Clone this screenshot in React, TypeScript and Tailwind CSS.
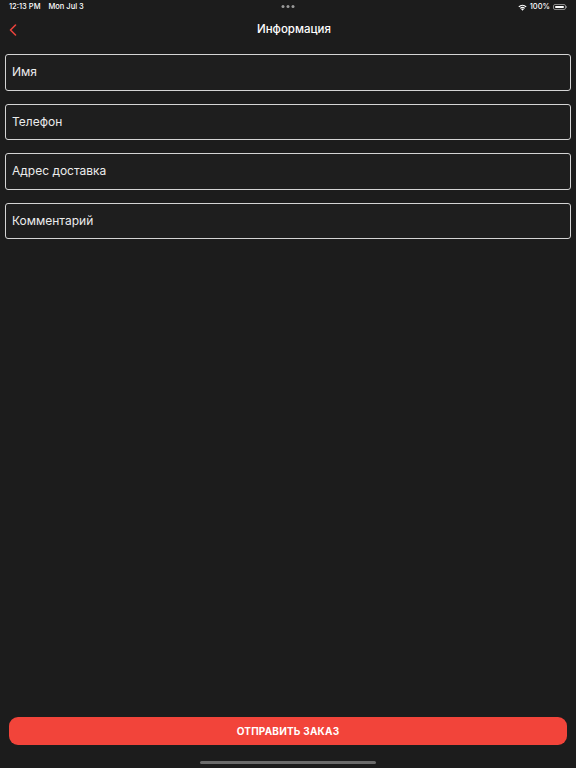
import React from "react";

const fields = ["Имя", "Телефон", "Адрес доставка", "Комментарий"];

const StatusBar = () => (
  <div className="h-[14px] flex items-center justify-between px-[9px] text-[7.5px] font-medium text-white">
    <div className="flex items-center gap-[8px]">
      <span>12:13 PM</span>
      <span>Mon Jul 3</span>
    </div>
    <div className="flex items-center gap-[2px] absolute left-1/2 -translate-x-1/2 top-[5px]">
      <span className="w-[3px] h-[3px] rounded-full bg-[#9a9a9a]" />
      <span className="w-[3px] h-[3px] rounded-full bg-[#9a9a9a]" />
      <span className="w-[3px] h-[3px] rounded-full bg-[#9a9a9a]" />
    </div>
    <div className="flex items-center gap-[3px]">
      <svg width="9" height="7" viewBox="0 0 18 14">
        <path d="M9 13.5 L6 10.2 A4.5 4.5 0 0 1 12 10.2 Z" fill="white" />
        <path d="M3.8 8 A7.5 7.5 0 0 1 14.2 8 L12.6 9.7 A5.2 5.2 0 0 0 5.4 9.7 Z" fill="white" />
        <path d="M0.8 4.9 A12 12 0 0 1 17.2 4.9 L15.6 6.6 A9.7 9.7 0 0 0 2.4 6.6 Z" fill="white" />
      </svg>
      <span>100%</span>
      <div className="flex items-center">
        <div className="w-[13px] h-[6.5px] rounded-[2px] border border-[#8a8a8a] p-[1px]">
          <div className="w-full h-full rounded-[1px] bg-white" />
        </div>
        <div className="w-[1px] h-[2.5px] bg-[#8a8a8a] rounded-r-sm" />
      </div>
    </div>
  </div>
);

export default function App() {
  return (
    <div
      className="relative w-[576px] h-[768px] bg-[#1c1c1c] flex flex-col overflow-hidden"
      style={{ fontFamily: "Inter, 'Noto Sans', sans-serif" }}
    >
      {/* STATUS */}
      <StatusBar />
      {/* NAV */}
      <div className="relative h-[30px] flex items-center justify-center pt-[2px]">
        <button className="absolute left-[7px] top-[10px] w-[12px] h-[12px] flex items-center justify-center">
          <svg width="8" height="12" viewBox="0 0 8 12" fill="none">
            <path d="M6.5 1 L1.5 6 L6.5 11" stroke="#e8433c" strokeWidth="1.6" strokeLinecap="round" strokeLinejoin="round" />
          </svg>
        </button>
        <h1 className="ml-[12px] text-[11.5px] font-medium text-white">Информация</h1>
      </div>
      {/* FORM */}
      <div className="flex-1 flex flex-col gap-[13px] px-[5px] pt-[10px]">
        {fields.map((f) => (
          <div
            key={f}
            className="h-[36.5px] rounded-[3px] border-[1.5px] border-[#d4d4d4] bg-[#1e1e1e] flex items-center px-[6px] text-[12px] text-[#ececec]"
          >
            {f}
          </div>
        ))}
      </div>
      {/* BUTTON */}
      <div className="px-[9px]">
        <button className="w-full h-[28px] rounded-[9px] bg-[#f2443a] text-white text-[10px] font-bold tracking-[0.2px]">
          ОТПРАВИТЬ ЗАКАЗ
        </button>
      </div>
      <div className="h-[23px] flex items-end justify-center pb-[4px]">
        <div className="w-[176px] h-[3px] rounded-full bg-[#6b6b6b]" />
      </div>
    </div>
  );
}
